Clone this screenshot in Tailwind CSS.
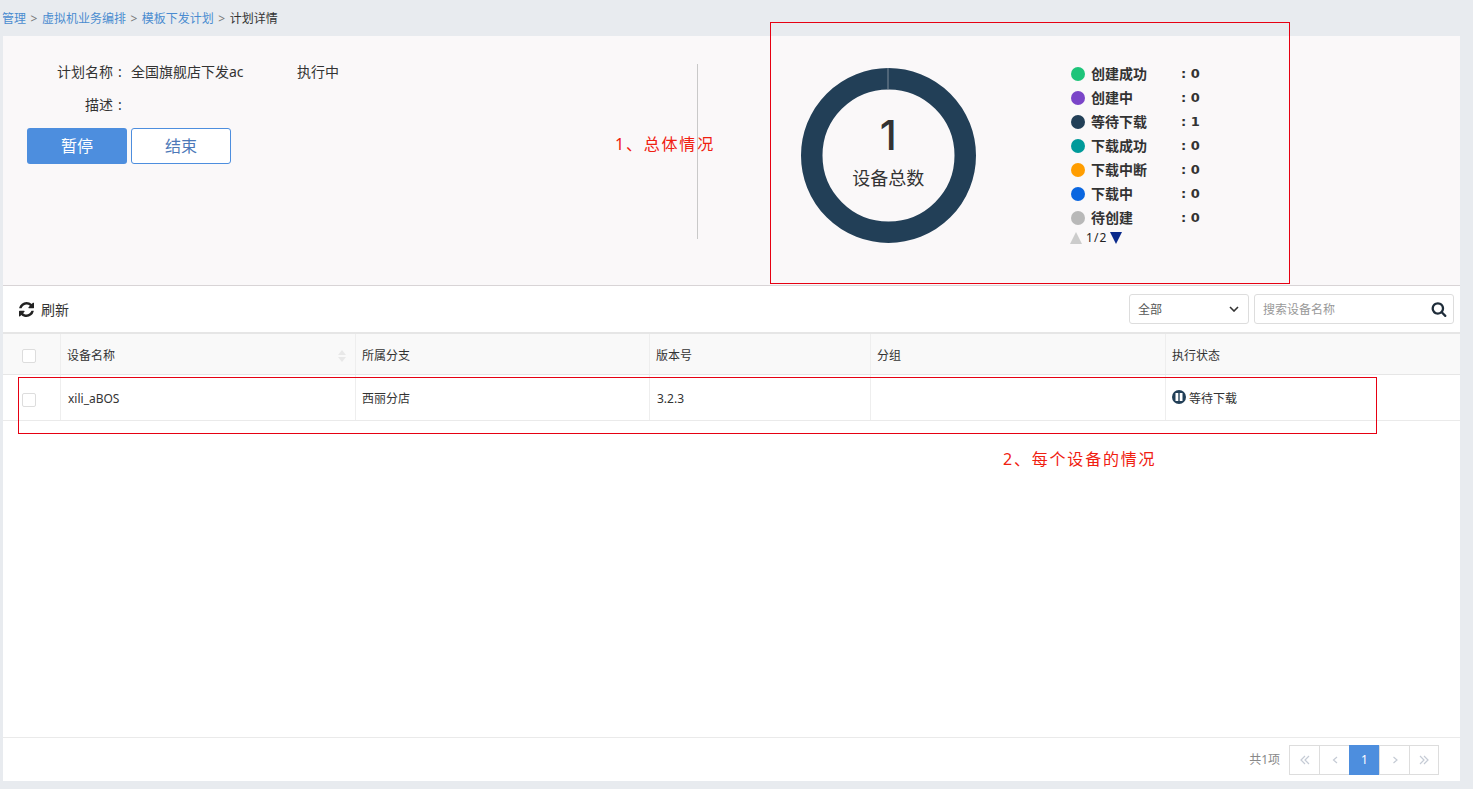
<!DOCTYPE html>
<html lang="zh">
<head>
<meta charset="utf-8">
<script src="https://cdn.jsdelivr.net/npm/@tailwindcss/browser@4"></script>
</head>
<body class="bg-[#e8ebef] font-['Noto_Sans','Noto_Sans_CJK_SC',sans-serif] text-[#333]">
<div class="relative h-[789px] w-[1473px] overflow-hidden">
  <nav class="flex h-[36px] items-center gap-[4.5px] pl-[2px] pt-[1px] text-[12px]">
    <span class="text-[#4a8bd0]">管理</span><span class="text-[#777]">&gt;</span>
    <span class="text-[#4a8bd0]">虚拟机业务编排</span><span class="text-[#777]">&gt;</span>
    <span class="text-[#4a8bd0]">模板下发计划</span><span class="text-[#777]">&gt;</span>
    <span>计划详情</span>
  </nav>

  <main class="ml-[3px] flex h-[745px] w-[1457px] flex-col bg-white">
    <section class="flex h-[250px] border-b border-[#d8d4d6] bg-[#faf8f9]">
      <div class="w-[694px] shrink-0 pl-[24px] pt-[25px] text-[14px]">
        <div class="flex h-[20px] items-center">
          <span class="w-[100px] text-right">计划名称<span class="inline-block w-[14px] text-center">:</span></span>
          <span class="ml-[4px] w-[166px]">全国旗舰店下发ac</span>
          <span>执行中</span>
        </div>
        <div class="mt-[13px] flex h-[20px] items-center">
          <span class="w-[100px] text-right">描述<span class="inline-block w-[14px] text-center">:</span></span>
        </div>
        <div class="mt-[14px] flex gap-[4px] text-[16px]">
          <button class="h-[36px] w-[100px] rounded-[3px] bg-[#4d8ede] text-white">暂停</button>
          <button class="h-[36px] w-[100px] rounded-[3px] border border-[#4d8ede] bg-white text-[#4d78b8]">结束</button>
        </div>
      </div>
      <div class="mt-[28px] h-[175px] w-px bg-[#c9c9c9]"></div>
      <div class="relative ml-[102.7px] mt-[32px] h-[175px] w-[175px] shrink-0">
        <svg viewBox="0 0 175 175" class="h-[175px] w-[175px]">
          <circle cx="87.5" cy="87.5" r="76.75" fill="none" stroke="#223f57" stroke-width="21.5"/>
          <rect x="86.5" y="0" width="1" height="22" fill="#7d8c99"/>
        </svg>
        <div class="absolute inset-0 flex flex-col items-center pt-[37px]">
          <span class="h-[54px] font-['Inter',sans-serif] text-[41px] font-medium leading-[60px] text-[#333]">1</span>
          <span class="mt-[6px] text-[18px] leading-[26px]">设备总数</span>
        </div>
      </div>
      <div class="ml-[95.3px] mt-[26px] w-[140px] text-[14px] font-bold">
        <div class="flex h-[24px] items-center"><i class="h-[14px] w-[14px] rounded-full bg-[#1ec47a]"></i><span class="ml-[6px] w-[90px] pb-[2px]">创建成功</span><span class="font-['DejaVu_Sans',sans-serif] text-[13px]">:&nbsp;0</span></div>
        <div class="flex h-[24px] items-center"><i class="h-[14px] w-[14px] rounded-full bg-[#7a45c8]"></i><span class="ml-[6px] w-[90px] pb-[2px]">创建中</span><span class="font-['DejaVu_Sans',sans-serif] text-[13px]">:&nbsp;0</span></div>
        <div class="flex h-[24px] items-center"><i class="h-[14px] w-[14px] rounded-full bg-[#223f57]"></i><span class="ml-[6px] w-[90px] pb-[2px]">等待下载</span><span class="font-['DejaVu_Sans',sans-serif] text-[13px]">:&nbsp;1</span></div>
        <div class="flex h-[24px] items-center"><i class="h-[14px] w-[14px] rounded-full bg-[#009a9a]"></i><span class="ml-[6px] w-[90px] pb-[2px]">下载成功</span><span class="font-['DejaVu_Sans',sans-serif] text-[13px]">:&nbsp;0</span></div>
        <div class="flex h-[24px] items-center"><i class="h-[14px] w-[14px] rounded-full bg-[#ff9d00]"></i><span class="ml-[6px] w-[90px] pb-[2px]">下载中断</span><span class="font-['DejaVu_Sans',sans-serif] text-[13px]">:&nbsp;0</span></div>
        <div class="flex h-[24px] items-center"><i class="h-[14px] w-[14px] rounded-full bg-[#0a66e0]"></i><span class="ml-[6px] w-[90px] pb-[2px]">下载中</span><span class="font-['DejaVu_Sans',sans-serif] text-[13px]">:&nbsp;0</span></div>
        <div class="flex h-[24px] items-center"><i class="h-[14px] w-[14px] rounded-full bg-[#b8b8b8]"></i><span class="ml-[6px] w-[90px] pb-[2px]">待创建</span><span class="font-['DejaVu_Sans',sans-serif] text-[13px]">:&nbsp;0</span></div>
        <div class="-ml-[1px] flex h-[16px] items-center gap-[4px] text-[12px] font-normal leading-none text-[#222]">
          <svg viewBox="0 0 12 12" class="h-[12px] w-[12px]"><path d="M6 0 12 12H0Z" fill="#cccccc"/></svg>
          <span class="w-[20px] whitespace-nowrap text-left tracking-[-1px]">1 / 2</span>
          <svg viewBox="0 0 12 12" class="h-[12px] w-[12px]"><path d="M0 0H12L6 12Z" fill="#0a2a8c"/></svg>
        </div>
      </div>
    </section>

    <div class="flex h-[46px] items-center justify-between pl-[16px] pr-[6px] text-[12px]">
      <div class="flex items-center gap-[7px]">
        <svg viewBox="0 0 1536 1536" class="h-[15px] w-[15px]" fill="#222"><path d="M1511 928q0 5-1 7-64 268-268 434.5t-478 166.5q-146 0-282.5-55t-243.5-157l-129 129q-19 19-45 19t-45-19-19-45v-448q0-26 19-45t45-19h448q26 0 45 19t19 45-19 45l-137 137q71 66 161 102t187 36q134 0 250-65t186-179q11-17 53-117 8-23 30-23h192q13 0 22.5 9.5t9.5 22.5zm25-800v448q0 26-19 45t-45 19h-448q-26 0-45-19t-19-45 19-45l138-138q-148-137-349-137-134 0-250 65t-186 179q-11 17-53 117-8 23-30 23h-199q-13 0-22.5-9.5t-9.5-22.5v-7q65-268 270-434.5t480-166.5q146 0 284 55.5t245 156.5l130-129q19-19 45-19t45 19 19 45z"/></svg>
        <span class="text-[14px]">刷新</span>
      </div>
      <div class="flex gap-[5px]">
        <div class="flex h-[30px] w-[120px] items-center justify-between rounded-[3px] border border-[#ddd] bg-white pl-[8px] pr-[9px] text-[#555]">
          <span class="mt-[2px]">全部</span>
          <svg viewBox="0 0 10 6" class="h-[6px] w-[10px]" fill="none" stroke="#333" stroke-width="1.6"><path d="M1 1 5 5 9 1"/></svg>
        </div>
        <div class="flex h-[30px] w-[200px] items-center justify-between rounded-[3px] border border-[#ddd] bg-white pl-[8px] pr-[6px] text-[#999]">
          <span class="mt-[2px]">搜索设备名称</span>
          <svg viewBox="0 0 1792 1792" class="h-[16px] w-[16px]" fill="#1f2d3a"><path d="M1216 832q0-185-131.5-316.5t-316.5-131.5-316.5 131.5-131.5 316.5 131.5 316.5 316.5 131.5 316.5-131.5 131.5-316.5zm512 832q0 52-38 90t-90 38q-54 0-90-38l-343-342q-179 124-399 124-143 0-273.5-55.5t-225-150-150-225-55.5-273.5 55.5-273.5 150-225 225-150 273.5-55.5 273.5 55.5 225 150 150 225 55.5 273.5q0 220-124 399l343 343q37 37 37 90z"/></svg>
        </div>
      </div>
    </div>

    <div class="grid h-[43px] grid-cols-[58px_295px_294px_221px_295px_294px] border-y border-t-2 border-[#e6e6e6] bg-[#f9f9f9] text-[12px]">
      <div class="flex items-center border-r border-[#eee] pl-[19px] pt-[4px]"><i class="h-[14px] w-[14px] rounded-[2px] border border-[#ddd] bg-white"></i></div>
      <div class="flex items-center justify-between border-r border-[#eee] pl-[6px] pr-[9px] pt-[4px]"><span>设备名称</span>
        <svg viewBox="0 0 8 12" class="h-[12px] w-[8px]" fill="#e8e8e8"><path d="M4 0 8 5H0ZM0 7H8L4 12Z"/></svg></div>
      <div class="flex items-center border-r border-[#eee] pl-[6px] pt-[4px]">所属分支</div>
      <div class="flex items-center border-r border-[#eee] pl-[6px] pt-[4px]">版本号</div>
      <div class="flex items-center border-r border-[#eee] pl-[6px] pt-[4px]">分组</div>
      <div class="flex items-center pl-[6px] pt-[4px]">执行状态</div>
    </div>
    <div class="grid h-[46px] grid-cols-[58px_295px_294px_221px_295px_294px] border-b border-[#eaeaea] bg-white text-[12px]">
      <div class="flex items-center border-r border-[#eee] pl-[19px] pt-[4px]"><i class="h-[14px] w-[14px] rounded-[2px] border border-[#ddd] bg-white"></i></div>
      <div class="flex items-center border-r border-[#eee] pl-[7px] pt-[2px]">xili_aBOS</div>
      <div class="flex items-center border-r border-[#eee] pl-[6px] pt-[2px]">西丽分店</div>
      <div class="flex items-center border-r border-[#eee] pl-[7px] pt-[2px]">3.2.3</div>
      <div class="border-r border-[#eee]"></div>
      <div class="flex items-center gap-[3px] pl-[6px] pt-[2px]">
        <svg viewBox="0 0 14 14" class="-mt-[3px] h-[14px] w-[14px]"><circle cx="7" cy="7" r="7" fill="#223f57"/><rect x="3.5" y="3" width="2.8" height="8" fill="#fff"/><rect x="7.7" y="3" width="2.8" height="8" fill="#fff"/></svg>
        <span>等待下载</span>
      </div>
    </div>

    <div class="flex-1"></div>

    <footer class="flex h-[44px] items-center justify-end border-t border-[#eaeaea] pr-[21px] text-[12px] text-[#888]">
      <span class="mr-[9px]">共1项</span>
      <div class="flex h-[30px]">
        <span class="flex w-[31px] items-center justify-center border border-[#ddd]">
          <svg viewBox="0 0 10 10" class="h-[10px] w-[10px]" fill="none" stroke="#c5cbd5" stroke-width="1.2"><path d="M5 1 1 5 5 9M9 1 5 5 9 9"/></svg></span>
        <span class="-ml-px flex w-[31px] items-center justify-center border border-[#ddd]">
          <svg viewBox="0 0 10 10" class="h-[10px] w-[10px]" fill="none" stroke="#c5cbd5" stroke-width="1.2"><path d="M7 2 3.5 5 7 8"/></svg></span>
        <span class="-ml-px flex w-[31px] items-center justify-center bg-[#4d8ede] text-white">1</span>
        <span class="-ml-px flex w-[31px] items-center justify-center border border-[#ddd]">
          <svg viewBox="0 0 10 10" class="h-[10px] w-[10px]" fill="none" stroke="#c5cbd5" stroke-width="1.2"><path d="M3.5 2 7 5 3.5 8"/></svg></span>
        <span class="-ml-px flex w-[30px] items-center justify-center border border-[#ddd]">
          <svg viewBox="0 0 10 10" class="h-[10px] w-[10px]" fill="none" stroke="#c5cbd5" stroke-width="1.2"><path d="M1 1 5 5 1 9M5 1 9 5 5 9"/></svg></span>
      </div>
    </footer>
  </main>

  <div class="absolute left-[770px] top-[22px] h-[262px] w-[520px] border border-[#e60012]"></div>
  <div class="absolute left-[18px] top-[377px] h-[57px] w-[1359px] border border-[#e60012]"></div>
  <span class="absolute left-[615px] top-[133px] text-[16px] leading-[22px] tracking-[1.8px] text-[#f02010]">1、总体情况</span>
  <span class="absolute left-[1003px] top-[448px] text-[16px] leading-[22px] tracking-[1.8px] text-[#f02010]">2、每个设备的情况</span>
</div>
</body>
</html>
